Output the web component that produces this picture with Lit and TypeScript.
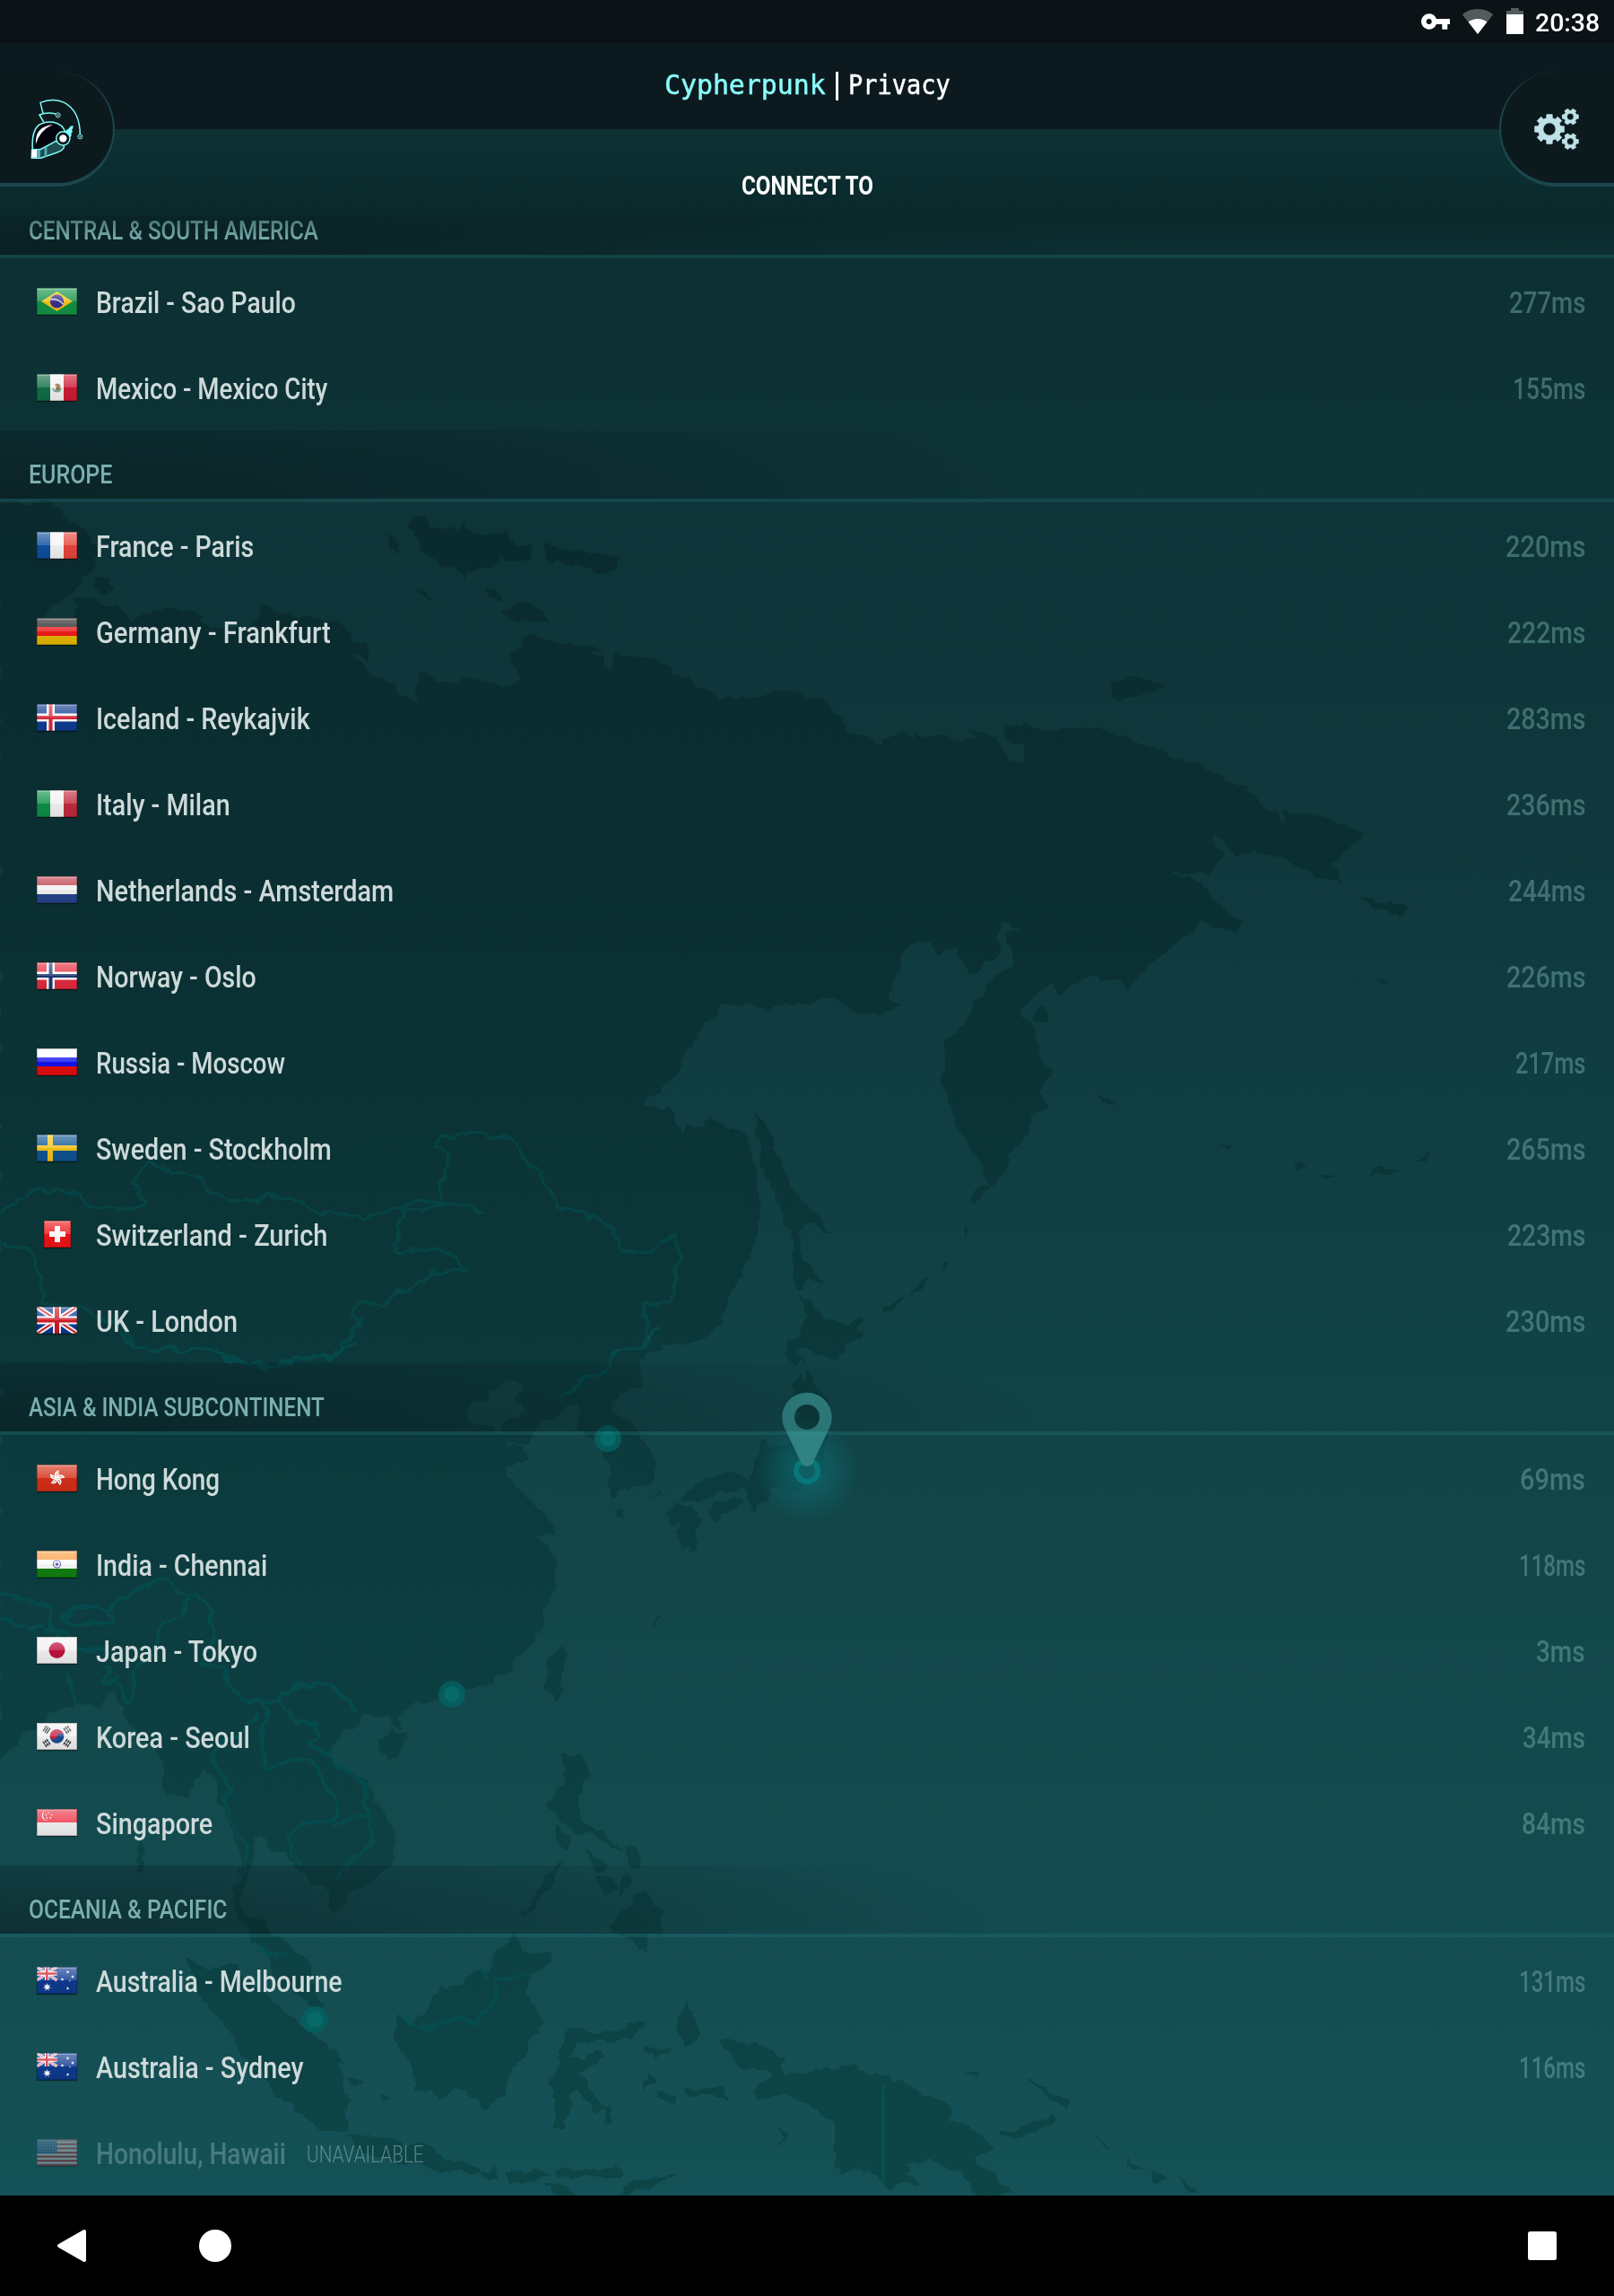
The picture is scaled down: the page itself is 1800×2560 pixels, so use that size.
import { LitElement, html, css, svg } from "lit";
import { customElement, property } from "lit/decorators.js";

type Server = { name: string; flag: string; width: number; ping?: string; pingWidth?: number };
type Region = { title: string; width: number; servers: Server[] };

const s = (name: string, flag: string, width: number, ping?: string, pingWidth?: number): Server => ({
  name, flag, width, ping, pingWidth,
});

const REGIONS: Region[] = [
  {
    title: "CENTRAL & SOUTH AMERICA", width: 323,
    servers: [
      s("Brazil - Sao Paulo", "br", 223, "277ms", 85),
      s("Mexico - Mexico City", "mx", 258, "155ms", 81),
    ],
  },
  {
    title: "EUROPE", width: 93,
    servers: [
      s("France - Paris", "fr", 176, "220ms", 89),
      s("Germany - Frankfurt", "de", 262, "222ms", 87),
      s("Iceland - Reykajvik", "is", 239, "283ms", 88),
      s("Italy - Milan", "it", 150, "236ms", 88),
      s("Netherlands - Amsterdam", "nl", 332, "244ms", 86),
      s("Norway - Oslo", "no", 179, "226ms", 88),
      s("Russia - Moscow", "ru", 211, "217ms", 78),
      s("Sweden - Stockholm", "se", 263, "265ms", 88),
      s("Switzerland - Zurich", "ch", 258, "223ms", 87),
      s("UK - London", "gb", 158, "230ms", 89),
    ],
  },
  {
    title: "ASIA & INDIA SUBCONTINENT", width: 330,
    servers: [
      s("Hong Kong", "hk", 138, "69ms", 73),
      s("India - Chennai", "in", 191, "118ms", 74),
      s("Japan - Tokyo", "jp", 180, "3ms", 55),
      s("Korea - Seoul", "kr", 172, "34ms", 70),
      s("Singapore", "sg", 130, "84ms", 71),
    ],
  },
  {
    title: "OCEANIA & PACIFIC", width: 221,
    servers: [
      s("Australia - Melbourne", "au", 275, "131ms", 74),
      s("Australia - Sydney", "au", 232, "116ms", 74),
      s("Honolulu, Hawaii", "us", 212),
    ],
  },
];

/* A one-line label condensed horizontally so that it fills a given width. */
@customElement("fit-label")
export class FitLabel extends LitElement {
  @property({ type: Number }) width = 0;
  @property() text = "";

  static styles = css`
    :host { display: block; flex: none; }
    .text { display: inline-block; white-space: pre; transform-origin: 0 50%; }
  `;

  render() {
    return html`<span class="text">${this.text}</span>`;
  }

  updated() {
    this.style.width = `${this.width}px`;
    const span = this.renderRoot.querySelector<HTMLElement>(".text")!;
    const natural = span.offsetWidth;
    if (natural > 0) span.style.transform = `scaleX(${this.width / natural})`;
  }
}

const box = (x: number, y: number, w: number, h: number, c: string) =>
  svg`<rect x=${x} y=${y} width=${w} height=${h} fill=${c}></rect>`;
const cols = (a: string, b: string, c: string) => svg`${box(0, 0, 15, 30, a)}${box(15, 0, 15, 30, b)}${box(30, 0, 15, 30, c)}`;
const bars = (a: string, b: string, c: string) => svg`${box(0, 0, 45, 10, a)}${box(0, 10, 45, 10, b)}${box(0, 20, 45, 10, c)}`;
const nordic = (bg: string, outer: string, inner?: string) => svg`
  ${box(0, 0, 45, 30, bg)}
  ${inner
    ? svg`${box(11, 0, 9, 30, outer)}${box(0, 10.5, 45, 9, outer)}${box(13.5, 0, 4, 30, inner)}${box(0, 13, 45, 4, inner)}`
    : svg`${box(12, 0, 6, 30, outer)}${box(0, 12, 45, 6, outer)}`}`;
const union = svg`
  ${box(0, 0, 45, 30, "#0a3a96")}
  <path d="M0 0L45 30M45 0L0 30" stroke="#fff" stroke-width="6"></path>
  <path d="M0 0L45 30M45 0L0 30" stroke="#d8232c" stroke-width="2"></path>
  <path d="M22.5 0V30M0 15H45" stroke="#fff" stroke-width="9"></path>
  <path d="M22.5 0V30M0 15H45" stroke="#cf1b26" stroke-width="5"></path>`;
const star = (x: number, y: number, r: number, n: number, c = "#fff") => {
  const pts: string[] = [];
  for (let i = 0; i < n * 2; i++) {
    const a = (Math.PI * i) / n - Math.PI / 2;
    const q = i % 2 ? r * 0.45 : r;
    pts.push(`${(x + q * Math.cos(a)).toFixed(2)},${(y + q * Math.sin(a)).toFixed(2)}`);
  }
  return svg`<polygon points=${pts.join(" ")} fill=${c}></polygon>`;
};
const trigram = (x: number, y: number, angle: number, broken: boolean) => svg`
  <g transform="translate(${x} ${y}) rotate(${angle})" stroke="#333" stroke-width="1.5">
    <path d="M-3.6 -2.4H3.6M-3.6 0H3.6M-3.6 2.4H3.6" stroke-dasharray=${broken ? "3.2 .8" : "none"}></path>
  </g>`;

const FLAGS: Record<string, unknown> = {
  br: svg`${box(0, 0, 45, 30, "#129244")}<path d="M5 15L22.500 4L40 15L22.500 26Z" fill="#f2c21c"></path>
    <circle cx="22.500" cy="15" r="7.600" fill="#3b2f8c"></circle><path d="M15.500 12.800Q23 11.500 29.500 18" stroke="#cfe0e8" stroke-width="1.500" fill="none"></path>`,
  mx: svg`${cols("#0f6e46", "#f2f2f2", "#ce1c34")}
    <path d="M18 16a4.600 4.600 0 0 0 9 0" stroke="#7ab08a" stroke-width="1.800" fill="none"></path>
    <path d="M20 12q3-3 6 0l.5 3-2.500 4-2-1-1.500-2 2-1z" fill="#96703c"></path><circle cx="22" cy="18.500" r="1.500" fill="#5aa8b4"></circle>`,
  fr: cols("#0d4f9e", "#f4f4f4", "#e8453c"),
  de: bars("#222", "#ef1c1c", "#e6b800"),
  is: nordic("#103c92", "#fff", "#d8283a"),
  it: cols("#0c9048", "#f2f2f2", "#bf2a3c"),
  nl: bars("#bd3a48", "#f2f2f2", "#27458c"),
  no: nordic("#e52a3e", "#fff", "#1c3874"),
  ru: bars("#ffffff", "#1414ee", "#e60c0c"),
  se: nordic("#0e5492", "#f2c31a"),
  gb: union,
  hk: svg`${box(0, 0, 45, 30, "#d42f18")}
    ${[0, 72, 144, 216, 288].map((a) => svg`<g transform="rotate(${a + 4} 22.500 15)">
      <path d="M22.500 15C18.200 12.500 19 7.800 24.200 6.200C23.200 8.600 25.600 11 22.500 15Z" fill="#fff"></path>
      <path d="M22.300 12.500Q21.300 10.500 22.600 9" stroke="#d8503c" stroke-width=".8" fill="none"></path></g>`)}`,
  in: svg`${bars("#ff9d42", "#fafafa", "#128012")}<circle cx="22.500" cy="15" r="4" fill="none" stroke="#5a58a8" stroke-width="1.100"></circle>
    <circle cx="22.500" cy="15" r="1.800" fill="#5a58a8"></circle>`,
  jp: svg`${box(0, 0, 45, 30, "#f1f1f1")}<circle cx="22.500" cy="15" r="9" fill="#bf123e"></circle>`,
  kr: svg`${box(0, 0, 45, 30, "#f1f1f1")}<circle cx="22.500" cy="15" r="7.800" fill="#1c4c92"></circle>
    <path d="M14.700 15a7.800 7.800 0 0 1 15.600 0a3.900 3.900 0 0 0-7.800 0a3.900 3.900 0 0 1-7.800 0z" fill="#cc2440" transform="rotate(12 22.500 15)"></path>
    ${trigram(11, 7.5, -56, false)}${trigram(34, 7.5, 56, true)}${trigram(11, 22.5, 56, true)}${trigram(34, 22.5, -56, true)}`,
  sg: svg`${box(0, 0, 45, 15, "#ee3446")}${box(0, 15, 45, 15, "#f1f1f1")}
    <path d="M10.500 2a5.500 5.500 0 1 0 2 10.800a5.600 5.600 0 0 1-2-10.800z" fill="#fff"></path>
    ${star(13, 4.2, 1.2, 5)}${star(16.6, 6.4, 1.2, 5)}${star(10.4, 6.6, 1.2, 5)}${star(15.4, 10, 1.2, 5)}${star(11.2, 10, 1.2, 5)}`,
  au: svg`${box(0, 0, 45, 30, "#0e3a90")}<g transform="scale(.5)">${union}</g>
    ${star(11.5, 22.5, 4.6, 7)}${star(34.5, 5.8, 1.9, 7)}${star(28.5, 14, 1.9, 7)}${star(40, 11, 1.9, 7)}${star(37, 15.6, 1.1, 5)}${star(34.5, 24, 1.9, 7)}`,
  us: svg`${box(0, 0, 45, 30, "#e8e8ea")}${[0, 1, 2, 3, 4, 5, 6].map((i) => box(0, i * 4.62, 45, 2.31, "#c22836"))}
    ${box(0, 0, 22.5, 16.1, "#234a92")}${Array.from({ length: 35 }, (_, i) =>
      svg`<circle cx=${2 + (i % 7) * 3.1} cy=${2 + Math.floor(i / 7) * 3} r=".6" fill="#c8d4ea"></circle>`)}`,
};

@customElement("country-flag")
export class CountryFlag extends LitElement {
  @property() code = "";

  static styles = css`
    :host { display: flex; justify-content: center; flex: none; width: 45px; height: 30px; }
    svg { display: block; box-shadow: 0 1px 1px rgba(0, 0, 0, 0.45); }
  `;

  render() {
    const square = this.code === "ch";
    const w = square ? 30 : 45;
    return html`<svg width=${w} height="30" viewBox="0 0 ${w} 30">
      <defs>
        <linearGradient id="gloss" x1="0" y1="0" x2="0" y2="1">
          <stop offset="0" stop-color="#fff" stop-opacity=".4"></stop>
          <stop offset=".5" stop-color="#fff" stop-opacity=".16"></stop>
          <stop offset=".5" stop-color="#000" stop-opacity=".03"></stop>
          <stop offset="1" stop-color="#000" stop-opacity=".08"></stop>
        </linearGradient>
      </defs>
      ${square
        ? svg`${box(0, 0, 30, 30, "#ee1418")}<path d="M15 6V24M6 15H24" stroke="#fff" stroke-width="6"></path>`
        : FLAGS[this.code]}
      <rect width=${w} height="30" fill="url(#gloss)"></rect>
      <rect x=".5" y=".5" width=${w - 1} height="29" fill="none" stroke="#000" stroke-opacity=".22"></rect>
      <path d="M1 1.500H${w - 1}" stroke="#fff" stroke-opacity=".3"></path>
    </svg>`;
  }
}

/* The coastlines are kept in three sheets, each with its own scale onto the page. */
const NORTH = "translate(0 500) scale(1.148 .6378)";
const SOUTH = "translate(0 1480) scale(1.148 .6888)";
const JAPAN = "translate(640 1440) scale(.33333)";

const NORTH_LAND = [
  "0,92 50,96 62,110 64,125 72,128 76,140 85,150 90,158 88,165 95,175 92,205 78,235 65,262 50,275 45,292 35,315 32,331 55,312 87,263 100,272 112,270 118,285 128,303 132,292 140,286 165,282 195,288 192,298 206,312 225,318 245,312 255,280 262,275 275,290 290,300 300,292 310,292 325,300 340,320 338,335 355,345 360,370 335,352 352,380 370,400 390,430 405,445 408,390 425,405 440,412 455,400 480,415 495,410 510,405 500,385 495,362 505,350 510,332 545,340 585,352 570,362 585,368 590,392 600,365 612,360 635,368 650,385 650,400 670,405 685,420 700,440 730,435 765,427 800,440 815,465 822,495 845,505 850,518 858,525 861,560 857,508 870,502 900,502 935,512 945,500 942,488 960,500 970,520 985,548 998,545 995,520 975,500 978,482 1020,490 1065,492 1105,512 1150,545 1190,580 1220,605 1240,650 1255,660 1242,632 1275,635 1300,650 1322,680 1308,700 1295,725 1302,755 1280,750 1260,728 1240,710 1215,700 1200,708 1190,695 1182,668 1178,685 1188,710 1175,740 1155,745 1130,730 1138,742 1165,760 1180,790 1205,830 1200,845 1168,830 1140,870 1115,900 1095,945 1080,925 1060,920 1040,935 1030,955 1020,935 1000,950 992,985 1005,1020 1008,1060 1022,1090 1010,1120 1015,1155 1000,1165 995,1205 982,1235 975,1270 965,1288 950,1245 930,1180 915,1110 918,1035 935,1010 950,960 970,920 985,910 985,870 978,848 995,842 975,832 967,845 972,870 965,890 945,915 935,905 930,870 915,882 905,870 885,870 868,920 862,960 878,975 850,990 835,985 820,970 795,958 785,972 775,968 750,978 740,970 700,975 695,985 685,1010 680,1025 665,1060 655,1100 630,1135 628,1150 640,1158 650,1150 655,1165 655,1185 665,1195 670,1180 685,1190 690,1172 710,1185 728,1210 730,1240 735,1260 738,1320 735,1380 720,1440 705,1490 697,1530 685,1555 668,1568 655,1562 642,1568 642,1580 0,1580",
  "735,1165 745,1190 755,1240 765,1280 780,1320 803,1368 785,1355 775,1375 780,1420 800,1455 783,1450 778,1470 772,1440 768,1370 750,1290 735,1210",
  "400,125 412,125 430,145 445,143 450,130 470,150 490,150 495,165 512,165 515,190 500,198 485,185 480,205 465,205 450,220 430,205 420,190 408,175",
  "530,165 545,178 560,178 580,185 602,192 598,212 580,214 570,205 545,198 535,188",
  "488,285 505,268 520,275 535,305 515,302 495,295", "470,243 482,245 486,262 475,262", "376,148 388,165 386,180 378,168",
  "405,245 420,262 422,268 410,258", "1080,408 1100,399 1112,402 1132,420 1120,432 1105,430 1088,440 1078,432",
  "1322,786 1345,792 1366,808 1362,818 1345,808 1330,802", "88,230 105,234 110,246 98,254 90,246", "72,265 88,262 90,272 75,276",
  "1010,978 1020,985 1015,1000 1006,1005", "1068,1130 1078,1140 1084,1152 1072,1145", "1186,1215 1197,1220 1190,1228",
  "1340,1255 1360,1258 1355,1266 1330,1268", "1376,1245 1388,1238 1386,1250", "1258,1252 1268,1258 1260,1262", "1285,1265 1296,1276 1288,1272",
  "948,1292 962,1290 955,1308 946,1322", "936,1366 940,1362 936,1380", "918,1424 922,1424 919,1438", "888,1470 900,1450 898,1468 885,1478", "862,1502 882,1474 874,1495 858,1512",
  "1336,922 1346,930 1344,934",
];

const SOUTH_LAND = [
  "0,25 640,25 633,34 620,56 622,87 608,105 594,119 595,133 610,155 620,165 627,189 633,218 634,247 615,257 595,271 592,252 595,223 585,206 581,179 569,177 560,165 563,136 557,124 548,135 535,150 520,165 510,190 498,185 485,195 480,172 490,155 505,145 512,130 498,115 510,100 500,84 488,90 478,100 475,118 462,125 452,148 462,160 475,158 480,175 492,190 505,192 512,215 492,225 490,240 500,255 512,275 520,290 535,312 538,330 522,335 535,360 542,378 538,400 540,420 530,455 528,480 515,510 495,550 480,575 455,585 440,600 420,605 400,610 385,625 395,650 380,645 378,625 355,625 350,640 335,650 322,680 325,700 340,720 350,730 370,770 383,820 380,870 360,895 340,920 325,945 318,935 320,915 305,900 290,880 280,850 262,845 258,825 247,828 245,870 235,900 235,935 242,955 255,960 265,985 285,1000 300,1040 305,1070 315,1100 300,1095 280,1075 265,1045 260,1010 245,990 232,950 228,930 232,900 228,885 235,860 228,820 215,770 210,730 200,710 195,725 175,760 160,755 160,710 150,680 140,665 125,640 115,600 108,590 95,610 75,608 45,625 40,650 20,665 0,700",
  "368,672 380,655 398,655 395,680 380,700 368,692", "545,517 552,530 546,570 541,603 530,580 532,545",
  "180,1018 200,1035 225,1030 240,1060 270,1095 290,1130 310,1150 325,1185 335,1215 338,1240 335,1300 318,1302 290,1270 265,1230 240,1185 225,1140 200,1090 185,1050",
  "338,1308 360,1305 385,1322 408,1322 425,1340 460,1352 468,1372 430,1365 390,1352 350,1335",
  "385,1135 388,1118 400,1130 415,1118 418,1095 425,1075 450,1065 460,1045 475,1040 485,1010 502,985 508,1005 532,1018 535,1030 518,1045 512,1075 530,1130 515,1145 510,1180 498,1195 492,1240 470,1262 460,1245 440,1232 430,1245 405,1230 402,1200 388,1170",
  "545,1175 548,1150 552,1135 575,1145 600,1142 622,1118 624,1130 612,1150 590,1158 560,1155 554,1180 565,1185 580,1172 586,1178 572,1200 562,1210 575,1240 592,1270 578,1272 562,1230 552,1240 550,1295 540,1297 540,1240 533,1220 545,1195",
  "545,690 565,695 574,725 560,770 565,800 585,815 602,845 585,832 575,818 562,820 545,800 535,770 545,740",
  "570,850 590,868 580,880", "605,838 618,845 622,875 612,870", "580,888 592,885 600,905 588,925", "605,880 612,900 603,920", "595,965 605,945 628,915 642,950 642,985 630,980 628,1012 615,990 600,985",
  "545,862 536,905 505,955 530,895", "540,808 552,820 550,845 540,830",
  "700,1160 722,1155 740,1165 758,1180 762,1215 790,1205 820,1192 860,1215 890,1230 925,1265 922,1285 945,1300 962,1328 950,1350 970,1380 985,1404 955,1404 930,1370 905,1345 880,1355 892,1385 860,1390 845,1358 820,1370 810,1345 812,1290 780,1255 762,1238 735,1250 735,1225 755,1205 725,1200 712,1185",
  "970,1300 1000,1295 1022,1272 1025,1285 1000,1310 970,1308", "1000,1222 1020,1232 1038,1258 1034,1268 1018,1240", "1062,1310 1078,1332 1070,1328", "1095,1345 1108,1368 1100,1362",
  "1120,1365 1135,1382 1128,1384", "1145,1375 1162,1400 1155,1398", "470,1365 482,1362 480,1378 470,1375", "492,1368 520,1362 535,1370 515,1380 495,1382",
  "540,1368 600,1360 604,1370 570,1376 542,1378", "600,1404 615,1382 655,1372 635,1388 615,1404", "530,1385 565,1404 545,1404", "660,1120 668,1092 672,1110 678,1140 668,1165 662,1145",
  "640,1240 655,1238 655,1250 640,1250", "668,1235 700,1232 708,1248 688,1245 668,1244", "758,1292 766,1300 758,1325", "625,1165 650,1172 648,1180 626,1175", "205,1100 218,1108 212,1115", "240,1190 252,1215 246,1220",
  "340,1210 352,1222 346,1232", "368,1240 378,1246 372,1256", "322,1170 334,1190 326,1188", "594,298 604,294 602,304", "625,1232 630,1205 634,1225", "940,1208 952,1206 950,1214",
  "136,830 141,850 137,885", "635,490 643,470 640,480", "585,1285 592,1262 594,1285",
];

const JAPAN_LAND = [
  "760,10 800,50 850,90 900,108 930,110 950,88 955,125 985,152 940,165 900,180 885,230 830,205 780,195 748,205 778,240 750,245 735,262 725,225 705,195 720,150 765,150 772,60",
  "750,280 760,300 780,295 775,265 800,275 812,315 835,345 855,375 860,440 840,500 830,560 840,605 790,650 770,635 750,655 720,665 650,655 655,685 620,705 610,732 590,725 572,690 570,665 520,665 470,675 410,702 360,695 380,670 440,620 560,608 600,635 600,580 625,550 620,510 645,505 640,535 690,515 730,490 745,420 750,330 738,315",
  "440,735 460,705 500,698 540,685 555,710 535,740 500,735 470,772 455,755", "355,705 370,720 400,725 425,765 410,800 410,850 385,870 372,835 360,860 345,800 355,775 330,775 305,745",
  "130,742 160,730 150,745 135,750", "970,115 1005,78 985,95", "270,690 278,665 282,690", "370,908 384,905 378,915",
];

const NORTH_BORDERS =
  "M0 1340L20 1310L42 1295L75 1303L85 1325L110 1332L130 1335L142 1318L130 1285L143 1250L170 1264L198 1276L205 1300L232 1318L260 1308L285 1312L310 1335L350 1342L385 1332L408 1313L448 1326L470 1334" +
  "M380 1330L410 1338L428 1320L428 1290L437 1240L422 1225L430 1205L465 1196L495 1208L520 1255L545 1330L580 1348L612 1405L630 1403L640 1385L658 1383L662 1410L655 1440L650 1490L625 1495L632 1568" +
  "M390 1335L384 1400L410 1405L420 1395L438 1410L453 1438L420 1440L400 1470L380 1478L372 1495L345 1495L342 1515L350 1530L330 1568M0 1392L25 1400L38 1430L40 1490L80 1505L105 1520L120 1545L130 1568";
const SOUTH_BORDERS =
  "M115 15L130 35L185 36L210 42L225 55L260 66L290 50L320 46L345 22M640 0L625 32L600 42L585 75L568 80L545 115M0 430L15 432L20 445L48 452L50 490L58 500M0 470L25 487L60 492L75 505L80 522L105 522M62 478L75 448L100 455L110 470L108 482L65 482Z" +
  "M105 460L130 430L160 405L172 430L190 430L205 455L208 500L195 545L215 550L225 585L240 607L260 608L272 590L310 572L330 590L345 617M182 435L180 465L155 482L150 535L135 545L125 610L112 570L102 578L105 545M65 555L74 610" +
  "M255 605L262 625L255 640L258 715L280 700L300 700L315 735L328 780L322 800L290 805L280 830L290 870M265 598L285 635L305 640L310 660L300 670L325 700L355 745L358 790L330 800L322 812M358 790L360 840L335 870L325 895M250 625L235 655L205 690L225 745L218 775L240 840L235 875L228 905" +
  "M395 1120L408 1138L440 1120L465 1125L478 1095L483 1055L515 1050M462 1035L475 1050L472 1040M250 1000L266 1020L280 1012";

@customElement("world-map")
export class WorldMap extends LitElement {
  static styles = css`
    :host { display: block; }
    svg { display: block; }
  `;

  private polys(list: string[]) {
    return list.map((p) => svg`<polygon points=${p}></polygon>`);
  }

  private dot(x: number, y: number) {
    return svg`<circle cx=${x} cy=${y} r="15" fill="#03605f" fill-opacity=".85"></circle><circle cx=${x} cy=${y} r="9" fill="#076968"></circle>`;
  }

  render() {
    return html`<svg width="1800" height="2448" viewBox="0 0 1800 2448">
      <defs>
        <linearGradient id="land" gradientUnits="userSpaceOnUse" x1="0" y1="500" x2="0" y2="2448">
          <stop offset="0" stop-color="#0a2a2d"></stop>
          <stop offset=".26" stop-color="#0a2f32"></stop>
          <stop offset=".46" stop-color="#0b3638"></stop>
          <stop offset=".67" stop-color="#0c3d40"></stop>
          <stop offset="1" stop-color="#0d4547"></stop>
        </linearGradient>
        <radialGradient id="glow">
          <stop offset="0" stop-color="#0d7076" stop-opacity=".75"></stop>
          <stop offset=".5" stop-color="#0d666c" stop-opacity=".5"></stop>
          <stop offset="1" stop-color="#0d666c" stop-opacity="0"></stop>
        </radialGradient>
        <filter id="rugged" filterUnits="userSpaceOnUse" x="0" y="500" width="1800" height="1948">
          <feTurbulence type="fractalNoise" baseFrequency=".05" numOctaves="3" seed="4" result="noise"></feTurbulence>
          <feDisplacementMap in="SourceGraphic" in2="noise" scale="16" xChannelSelector="R" yChannelSelector="G"></feDisplacementMap>
        </filter>
        <mask id="coast" maskUnits="userSpaceOnUse" x="0" y="0" width="1800" height="2448">
          <g fill="#fff" stroke="#fff" stroke-width="1.500" stroke-linejoin="round" filter="url(#rugged)">
            <g transform=${NORTH}>${this.polys(NORTH_LAND)}</g>
            <g transform=${SOUTH}>${this.polys(SOUTH_LAND)}</g>
            <g transform=${JAPAN}>${this.polys(JAPAN_LAND)}</g>
          </g>
        </mask>
      </defs>
      <rect y="500" width="1800" height="1948" fill="url(#land)" mask="url(#coast)"></rect>
      <g fill="none" stroke="#0a5355" stroke-opacity=".6" stroke-linejoin="round" filter="url(#rugged)">
        <g transform=${NORTH}><path vector-effect="non-scaling-stroke" stroke-width="4" stroke-opacity=".45" d=${NORTH_BORDERS}></path></g>
        <g transform=${SOUTH}><path vector-effect="non-scaling-stroke" stroke-width="4" d=${SOUTH_BORDERS}></path></g>
      </g>
      <path d="M985 2324V2434" stroke="#0a5355" stroke-opacity=".6" stroke-width="4"></path>
      ${this.dot(678, 1604)}${this.dot(504, 1889)}${this.dot(351, 2252)}
      <circle cx="900" cy="1640" r="58" fill="url(#glow)"></circle>
      <circle cx="900" cy="1640" r="15" fill="#08777a"></circle>
      <circle cx="900" cy="1640" r="9" fill="#0d5f63"></circle>
      <path fill="#318383" fill-rule="evenodd"
        d="M900 1552.700c-15.200 0-27.700 12.300-27.700 27.500c0 4.500 1.100 8.800 3 12.600L893.500 1631c2.500 5.300 10.500 5.300 13 0L924.700 1592.800c1.900-3.800 3-8.100 3-12.600c0-15.200-12.500-27.500-27.700-27.500zM900 1566a14 14 0 1 1 0 28a14 14 0 0 1 0-28z"></path>
    </svg>`;
  }
}

/* Closed outline of a cog with evenly spaced square teeth. */
const gear = (cx: number, cy: number, r: number, hole: number, teeth: number, half: number) => {
  const root = r * 0.77;
  const pt = (q: number, a: number) => `${(cx + q * Math.cos(a)).toFixed(2)} ${(cy + q * Math.sin(a)).toFixed(2)}`;
  const d: string[] = [];
  for (let i = 0; i < teeth; i++) {
    const a = (2 * Math.PI * i) / teeth;
    d.push(pt(root, a - half * 1.35), pt(r, a - half), pt(r, a + half), pt(root, a + half * 1.35));
  }
  return `M${d.join("L")}Z M${cx - hole} ${cy}a${hole} ${hole} 0 1 0 ${hole * 2} 0a${hole} ${hole} 0 1 0 ${-hole * 2} 0Z`;
};

@customElement("app-root")
export class AppRoot extends LitElement {
  static styles = css`
    :host {
      display: grid;
      grid-template-rows: 48px 96px 96px 2208px 112px;
      position: relative;
      width: 1800px;
      height: 2560px;
      overflow: hidden;
      font-family: Roboto, "Liberation Sans", sans-serif;
      background: linear-gradient(#0d3133 144px, #0a2a2c 236px, #0c2f32 286px, #0d3438 560px, #0f373c 900px, #103e42 1250px, #114447 1600px, #134b4f 2080px, #145257 2448px);
    }
    .map { position: absolute; left: 0; top: 0; }
    .status {
      position: relative;
      display: flex;
      align-items: center;
      justify-content: flex-end;
      padding: 2px 16px 0 0;
      box-sizing: border-box;
      gap: 12px;
      background: #0b1316;
      color: #fff;
      font-size: 28px;
      font-weight: 500;
    }
    .status svg { display: block; margin-top: -2px; }
    .bar {
      position: relative;
      display: flex;
      align-items: center;
      justify-content: center;
      gap: 11px;
      padding: 0 0 5px 1px;
      box-sizing: border-box;
      background: #0c1a1f;
      color: #fff;
      font-family: "DejaVu Sans Mono", monospace;
      font-size: 31px;
      -webkit-text-stroke: 0.5px currentColor;
    }
    .brand { color: #8afcfa; }
    .rule { width: 3px; height: 32px; background: #fff; margin: 5px 0 0; }
    .connect {
      position: relative;
      display: flex;
      align-items: center;
      justify-content: center;
      padding: 29px 0 0 1px;
      box-sizing: border-box;
      color: #fff;
      font-size: 29px;
      font-weight: 700;
    }
    .list { position: relative; overflow: hidden; }
    .regions { display: flex; flex-direction: column; margin-top: -32px; }
    .fade {
      position: absolute; left: 0; right: 0; top: 0; height: 28px;
      background: linear-gradient(rgba(10, 40, 42, 0.5), rgba(10, 40, 42, 0));
    }
    .heading {
      display: flex;
      align-items: center;
      height: 80px;
      padding: 21px 0 0 32px;
      box-sizing: border-box;
      border-bottom: 4px solid rgba(45, 140, 145, 0.21);
      color: #7aafae;
      font-size: 29px;
      line-height: 30px;
      font-weight: 500;
      background: radial-gradient(ellipse 1200px 150px at 0 100%, rgba(8, 18, 22, 0.5), rgba(8, 18, 22, 0.26) 50%, rgba(8, 18, 22, 0)) padding-box;
    }
    .row {
      display: flex;
      align-items: center;
      height: 96px;
      padding: 0 32px 0 41px;
      box-sizing: border-box;
      color: #ced9d9;
      font-size: 32.500px;
      font-weight: 500;
    }
    .name { margin: 4px 0 0 21px; }
    .ping { margin: 4px 0 0 auto; color: rgba(125, 180, 178, 0.45); }
    .off { color: rgba(135, 175, 178, 0.45); }
    .off .flag { opacity: 0.42; }
    .tag { margin: 4px 0 0 23px; font-size: 25px; font-weight: 300; color: rgba(160, 195, 197, 0.5); }
    .corner {
      position: absolute;
      top: 80px;
      width: 128px;
      height: 128px;
      box-sizing: border-box;
      background: #0c1a1e;
      border: 0 solid #1b474e;
      border-bottom-width: 4px;
    }
    .account { left: 0; border-right-width: 2px; border-radius: 0 64px 64px 0; padding: 29px 0 0 33px; }
    .settings { right: 0; border-left-width: 2px; border-radius: 64px 0 0 64px; padding: 38px 0 0 37px; }
    .corner svg { display: block; }
    .nav { position: relative; display: flex; align-items: center; padding: 0 64px 0 63px; background: #000; }
    .home { margin-left: 125px; }
    .recent { margin-left: auto; }
    .nav svg { display: block; }
  `;

  private row(server: Server) {
    return html`<div class="row ${server.ping ? "" : "off"}">
      <country-flag class="flag" code=${server.flag}></country-flag>
      <fit-label class="name" .width=${server.width} .text=${server.name}></fit-label>
      ${server.ping
        ? html`<fit-label class="ping" .width=${server.pingWidth ?? 0} .text=${server.ping}></fit-label>`
        : html`<fit-label class="tag" .width=${131} .text=${"UNAVAILABLE"}></fit-label>`}
    </div>`;
  }

  render() {
    return html`
      <world-map class="map"></world-map>
      <div class="status">
        <svg width="116" height="32" viewBox="1584 8 116 32">
          <path fill="#fff" fill-rule="evenodd" d="M1593.700 15.300a8.700 8.700 0 0 1 8.200 5.800H1617v5.800h-2.700v5.900h-6v-5.900h-6.400a8.700 8.700 0 1 1-8.200-11.600zM1593.700 21a3 3 0 1 0 0 6a3 3 0 0 0 0-6z"></path>
          <path fill="#545b5d" d="M1648 38L1630.800 16.300Q1638 10 1648 10T1665.200 16.300Z"></path>
          <path fill="#fff" d="M1648 38L1637.600 24.600Q1642 21 1648 21T1658.400 24.600Z"></path>
          <path fill="#545b5d" d="M1685 9h9v3h5v5h-19v-5h5z"></path>
          <rect x="1680" y="16" width="19" height="22" fill="#fff"></rect>
        </svg>
        <fit-label .width=${72} .text=${"20:38"}></fit-label>
      </div>
      <header class="bar">
        <fit-label class="brand" .width=${180} .text=${"Cypherpunk"}></fit-label>
        <span class="rule"></span>
        <fit-label .width=${114} .text=${"Privacy"}></fit-label>
      </header>
      <div class="connect"><fit-label .width=${147} .text=${"CONNECT TO"}></fit-label></div>
      <main class="list">
        <div class="regions">
          ${REGIONS.map((region) => html`
            <section>
              <div class="heading"><fit-label .width=${region.width} .text=${region.title}></fit-label></div>
              ${region.servers.map((server) => this.row(server))}
            </section>`)}
        </div>
        <div class="fade"></div>
      </main>
      <nav class="nav">
        <svg width="34" height="38" viewBox="0 0 34 38"><path d="M3 19L31 3V35Z" fill="#fff" stroke="#fff" stroke-width="4" stroke-linejoin="round"></path></svg>
        <svg class="home" width="36" height="36" viewBox="0 0 36 36"><circle cx="18" cy="18" r="18" fill="#fff"></circle></svg>
        <svg class="recent" width="32" height="32" viewBox="0 0 32 32"><rect width="32" height="32" rx="2.500" fill="#fff"></rect></svg>
      </nav>
      <div class="corner account">
        <svg width="61.667" height="69" viewBox="100 117 185 207" fill="none" stroke="#80faf8" stroke-width="4.500">
          <path d="M145 169L136 133Q180 116 216 133Q268 160 269 240"></path>
          <path d="M147 198L133 174Q160 163 187 171"></path>
          <circle cx="195" cy="175" r="7.500" stroke-width="3"></circle><circle cx="195" cy="175" r="2.500" fill="#fff" stroke="none"></circle>
          <circle cx="269" cy="247" r="7.500" stroke-width="3"></circle><circle cx="269" cy="247" r="2.500" fill="#fff" stroke="none"></circle>
          <path d="M110 290Q106 230 130 209Q150 194 180 199Q212 206 219 232"></path>
          <path d="M118 288Q112 240 130 216Q150 200 178 204Q206 210 212 235L188 255Q170 275 118 288Z" fill="#02030f" stroke="none"></path>
          <path d="M121 272Q116 214 178 206Q134 226 121 272Z" fill="#f4f4f4" stroke="none"></path>
          <path d="M108 290H136L188 262L215 275V284Q208 295 190 301L138 319H107Z" fill="#1f4c50"></path>
          <path d="M107 291H124V317H107Z" fill="#fff" stroke="none"></path>
          <path d="M124 291H136V318H124ZM150 284L158 280V312L150 315Z" fill="#4fb0b8" stroke="none"></path>
          <path d="M216 240Q220 224 232 220Q234 210 246 211Q247 220 241 224Q247 230 239 236Q243 245 234 250Z" fill="#80faf8" stroke="none"></path>
          <circle cx="212" cy="253" r="23" fill="#0a1a1e"></circle>
          <circle cx="212" cy="253" r="12.500" fill="#fff" stroke="none"></circle>
        </svg>
      </div>
      <div class="corner settings">
        <svg width="50" height="52" viewBox="1711 118 50 52">
          <g fill="#bfe2e8" fill-rule="evenodd" stroke="#bfe2e8" stroke-width=".8" stroke-linejoin="round">
            <path d=${gear(1728, 144, 16.6, 7.1, 8, 0.19)}></path>
            <path d=${gear(1751.3, 130.1, 9.2, 3.9, 6, 0.24)}></path>
            <path d=${gear(1751.3, 157.7, 9.2, 3.9, 6, 0.24)}></path>
          </g>
        </svg>
      </div>
    `;
  }
}
